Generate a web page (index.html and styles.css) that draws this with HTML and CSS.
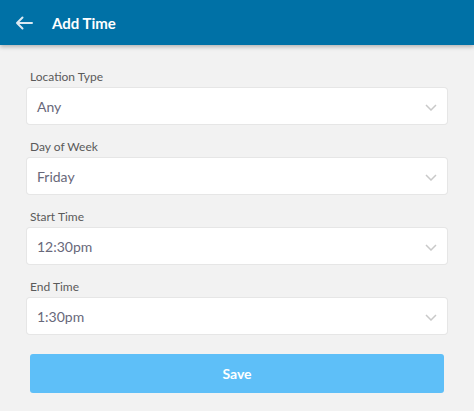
FILE: index.html
```html
<!DOCTYPE html>
<html>
<head>
<meta charset="utf-8">
<link rel="stylesheet" href="styles.css">
</head>
<body>
<header class="topbar">
  <svg class="back" width="18" height="14" viewBox="0 0 18 14"><path d="M17 7H2M7.5 1.5L2 7l5.5 5.5" fill="none" stroke="#dbe9f2" stroke-width="2" stroke-linecap="round" stroke-linejoin="round"/></svg>
  <h1 class="title">Add Time</h1>
</header>
<main class="form">
  <div class="field">
    <div class="label">Location Type</div>
    <div class="select"><span>Any</span><svg class="chev" width="12" height="7" viewBox="0 0 12 7"><path d="M1 1l5 5 5-5" fill="none" stroke="#c9c9c9" stroke-width="1.5"/></svg></div>
  </div>
  <div class="field">
    <div class="label">Day of Week</div>
    <div class="select"><span>Friday</span><svg class="chev" width="12" height="7" viewBox="0 0 12 7"><path d="M1 1l5 5 5-5" fill="none" stroke="#c9c9c9" stroke-width="1.5"/></svg></div>
  </div>
  <div class="field">
    <div class="label">Start Time</div>
    <div class="select"><span>12:30pm</span><svg class="chev" width="12" height="7" viewBox="0 0 12 7"><path d="M1 1l5 5 5-5" fill="none" stroke="#c9c9c9" stroke-width="1.5"/></svg></div>
  </div>
  <div class="field">
    <div class="label">End Time</div>
    <div class="select"><span>1:30pm</span><svg class="chev" width="12" height="7" viewBox="0 0 12 7"><path d="M1 1l5 5 5-5" fill="none" stroke="#c9c9c9" stroke-width="1.5"/></svg></div>
  </div>
  <button class="save">Save</button>
</main>
</body>
</html>
```
FILE: styles.css
```css
html, body { margin: 0; padding: 0; }
body {
  background: #f2f2f2;
  font-family: "Lato", "Open Sans", sans-serif;
  width: 474px;
  height: 411px;
  overflow: hidden;
}
.topbar {
  height: 45px;
  background: #0071a6;
  display: flex;
  align-items: center;
  padding-left: 15px;
  box-shadow: 0 2px 4px rgba(0,0,0,0.25);
  position: relative;
}
.back { margin-right: 19px; }
.title {
  margin: 0;
  color: #fff;
  font-size: 15px;
  font-weight: 700;
}
.form {
  padding: 25px 27px 0 27px;
  display: flex;
  flex-direction: column;
}
.field { margin-bottom: 16px; }
.label {
  font-size: 12px;
  color: #5a5a5a;
  padding-left: 3px;
  height: 18px;
  line-height: 14px;
}
.select {
  background: #fff;
  height: 36px;
  border-radius: 3px;
  box-shadow: 0 0 0 1px #e6e6e6;
  display: flex;
  align-items: center;
  justify-content: space-between;
  padding: 0 10px 0 10px;
  font-size: 14px;
  color: #68687a;
}
.chev { margin-top: 3px; }
.save {
  margin: 4px 3px 0 3px;
  height: 39px;
  background: #5ebff8;
  border: none;
  border-radius: 3px;
  color: #fff;
  font-family: inherit;
  font-weight: 700;
  font-size: 14px;
}
```
